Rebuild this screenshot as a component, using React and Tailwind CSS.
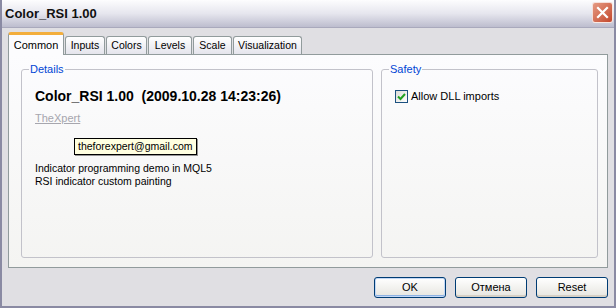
import React from 'react'

const tabs = [
  { label: 'Common', w: 'w-[56px]', active: true },
  { label: 'Inputs', w: 'w-[40px]' },
  { label: 'Colors', w: 'w-[41px]' },
  { label: 'Levels', w: 'w-[44px]' },
  { label: 'Scale', w: 'w-[39px]' },
  { label: 'Visualization', w: 'w-[69px]' },
]

const XpButton = ({ children, primary }) => (
  <button className={`w-[72px] h-[21px] rounded-[3px] border border-[#003C74] bg-gradient-to-b from-[#FFFFFF] to-[#E6E5DF] text-[11px] text-black ${primary ? 'shadow-[inset_0_0_0_1px_#C2D7F5,inset_0_-1px_0_1px_#8DB2E3]' : 'shadow-[inset_0_-2px_0_#D6D0C5]'}`}>
    {children}
  </button>
)

const App = () => {
  return (
    <div className="w-[616px] h-[308px] bg-[#E0DFE3] border-x-2 border-b-2 border-[#8A8AA3] flex flex-col text-black font-['Liberation_Sans',Arial,sans-serif] overflow-hidden">
      {/* title bar */}
      <div className="h-[28px] -mx-[2px] flex items-center justify-between pl-[5px] pr-[3px] bg-gradient-to-b from-[#FDFDFE] via-[#E6E6EE] to-[#BDBDCE] border-b border-[#A9A9BC]">
        <span className="text-[13px] font-bold text-[#111]">Color_RSI 1.00</span>
        <div className="w-[21px] h-[21px] -mt-[3px] rounded-[3px] border border-white/80 bg-gradient-to-br from-[#E59A83] to-[#C2452A] flex items-center justify-center">
          <svg width="13" height="13" viewBox="0 0 13 13">
            <path d="M2 2 L11 11 M11 2 L2 11" stroke="white" strokeWidth="2.2" strokeLinecap="square" />
          </svg>
        </div>
      </div>

      <div className="flex-1 flex flex-col px-[6px]">
        {/* tabs */}
        <div className="flex items-end h-[26px] gap-[1px] relative z-10">
          {tabs.map((t) =>
            t.active ? (
              <div key={t.label} className={`${t.w} h-[23px] -mb-[1px] bg-[#FCFCFE] border-x border-[#919B9C] rounded-t-[3px] border-t-[3px] border-t-[#F3AE3C] flex items-center justify-center text-[11px]`}>
                {t.label}
              </div>
            ) : (
              <div key={t.label} className={`${t.w} h-[18px] bg-gradient-to-b from-[#FFFFFF] to-[#E4E4EC] border-x border-t border-[#919B9C] rounded-t-[3px] flex items-center justify-center text-[10.5px]`}>
                {t.label}
              </div>
            )
          )}
        </div>

        {/* tab panel */}
        <div className="h-[214px] border border-[#919B9C] bg-gradient-to-b from-[#FCFCFE] to-[#F4F4F2] flex gap-[8px] pl-[12px] pr-[9px] pt-[8px] pb-[9px]">
          <fieldset className="relative w-[352px] border border-[#C2C2CA] rounded-[3px] px-[13px]">
            <legend className="-ml-[6px] px-[1px] text-[11px] text-[#0046D5] leading-[13px]">Details</legend>
            <div className="mt-[13px] text-[14px] font-bold leading-[14px] whitespace-pre">Color_RSI 1.00  (2009.10.28 14:23:26)</div>
            <div className="mt-[9px] text-[11px] leading-[13px] text-[#A6A6AE] underline">TheXpert</div>
            <div className="mt-[37px] text-[10.5px] leading-[13px]">Indicator programming demo in MQL5</div>
            <div className="text-[10.5px] leading-[13px]">RSI indicator custom painting</div>
            <div className="absolute left-[52px] top-[62px] h-[17px] px-[3px] flex items-center bg-[#FFFFE1] border border-black text-[10.5px] shadow-[1px_1px_0_rgba(0,0,0,0.4)]">
              theforexpert@gmail.com
            </div>
          </fieldset>

          <fieldset className="flex-1 border border-[#C2C2CA] rounded-[3px] px-[13px]">
            <legend className="-ml-[6px] px-[1px] text-[11px] text-[#0046D5] leading-[13px]">Safety</legend>
            <label className="mt-[12px] flex items-center gap-[3px] text-[11px]">
              <span className="w-[13px] h-[13px] border border-[#1C5180] bg-gradient-to-br from-[#DCDCD7] to-[#FFFFFF] flex items-center justify-center">
                <svg width="9" height="9" viewBox="0 0 9 9">
                  <path d="M1 4.5 L3.5 7 L8 2" stroke="#21A121" strokeWidth="2" fill="none" />
                </svg>
              </span>
              Allow DLL imports
            </label>
          </fieldset>
        </div>

        {/* buttons */}
        <div className="flex justify-end gap-[9px] mt-[9px]">
          <XpButton primary>OK</XpButton>
          <XpButton>Отмена</XpButton>
          <XpButton>Reset</XpButton>
        </div>
      </div>
    </div>
  )
}

export default App
